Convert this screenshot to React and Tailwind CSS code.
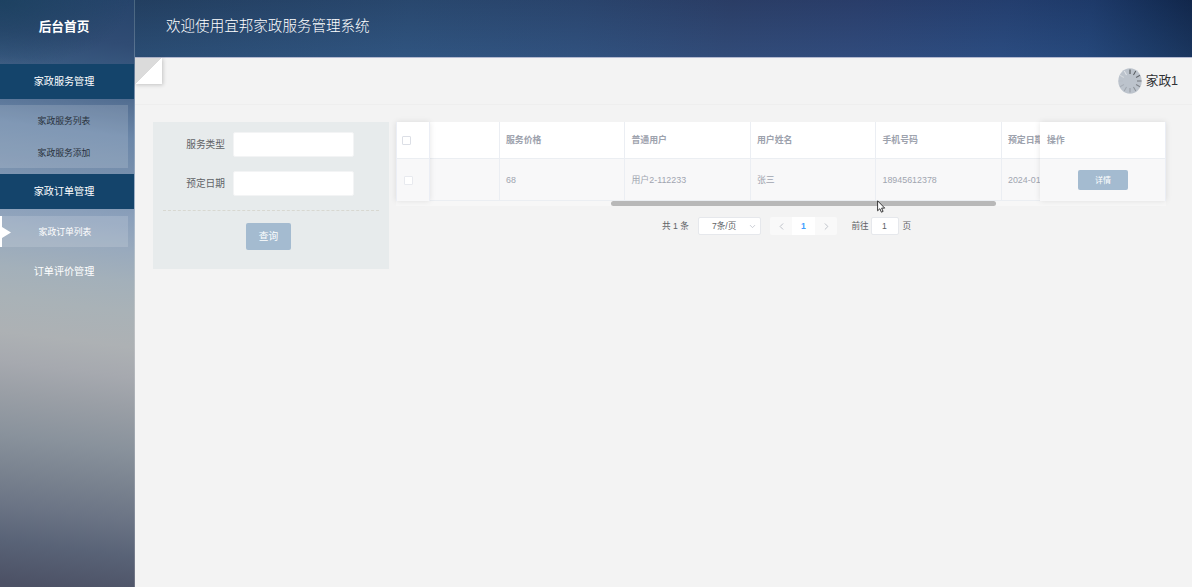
import { ChevronDown, ChevronLeft, ChevronRight } from "lucide-react";
import clsx from "clsx";

const columns = [
  { title: "", value: "", width: "w-[69.5px]" },
  { title: "服务价格", value: "68", width: "w-[125.5px]" },
  { title: "普通用户", value: "用户2-112233", width: "w-[125.5px]" },
  { title: "用户姓名", value: "张三", width: "w-[125.5px]" },
  { title: "手机号码", value: "18945612378", width: "w-[125.5px]" },
  { title: "预定日期", value: "2024-01-15", width: "w-[125.5px]" },
];

const ticks = [
  { angle: 0, color: "#45484d" },
  { angle: 30, color: "#55585d" },
  { angle: 60, color: "#62666c" },
  { angle: 90, color: "#72767c" },
  { angle: 120, color: "#7d8188" },
  { angle: 150, color: "#8b9097" },
  { angle: 180, color: "#969ba3" },
  { angle: 210, color: "#9fa5ad" },
  { angle: 240, color: "#a8aeb7" },
  { angle: 270, color: "#b9bfc8" },
  { angle: 300, color: "#d3d7dc" },
  { angle: 330, color: "#e0e3e7" },
];

function MenuTitle({ children, active, className }) {
  return (
    <div className={clsx("flex h-[35px] items-center justify-center pr-[6px] text-[10.1px] text-white", active && "bg-[#14446b]", className)}>
      {children}
    </div>
  );
}

function Sidebar() {
  return (
    <aside className="h-[587px] w-[135px] shrink-0 border-r border-white/20 bg-[radial-gradient(ellipse_130px_70px_at_0%_0%,rgba(26,64,94,0.8)_0%,rgba(26,64,94,0)_100%),linear-gradient(187deg,#26446b_0px,#304c74_45px,#38587f_70px,#587396_108px,#6b87a9_138px,#7890ad_177px,#8ba0bb_217px,#99aabd_250px,#a3b0ba_280px,#a9b2b7_310px,#adb1b4_345px,#a6a9af_375px,#9a9fa6_405px,#89929c_447px,#79828f_485px,#6b7485_517px,#596377_552px,#4c5165_594px)]">
      <div className="flex h-16 items-center justify-center pr-[6px] pb-[9px] text-[12.7px] font-bold text-white">后台首页</div>
      <MenuTitle active>家政服务管理</MenuTitle>
      <div className="mt-[6px] mr-[6px] h-[63px] bg-white/15 text-[8.8px] text-[#28313c]">
        <div className="flex h-[32px] items-center justify-center pt-[2px]">家政服务列表</div>
        <div className="flex h-[31px] items-center justify-center pt-[2px]">家政服务添加</div>
      </div>
      <MenuTitle active className="mt-[6px]">家政订单管理</MenuTitle>
      <div className="mt-[7px] mr-[6px] flex h-[31px] items-center bg-white/15 text-[8.8px] text-white">
        <svg width="11" height="31" viewBox="0 0 11 31" fill="#fff">
          <path d="M0 0h2v11l9 5.5L2 22v9H0z" />
        </svg>
        <span className="flex-1 pt-[2px] pr-[9px] text-center">家政订单列表</span>
      </div>
      <MenuTitle className="mt-[7px]">订单评价管理</MenuTitle>
    </aside>
  );
}

function Avatar() {
  return (
    <svg width="24" height="26" viewBox="0 0 24 26">
      <ellipse cx="12" cy="13" rx="11.7" ry="12.7" fill="#bcc3cc" />
      {ticks.map((t) => (
        <line key={t.angle} x1="12" y1="1.5" x2="12" y2="6" stroke={t.color} strokeWidth="1" transform={`rotate(${t.angle} 12 13)`} />
      ))}
    </svg>
  );
}

function Field({ label }) {
  return (
    <label className="flex h-[25px] items-center text-[9.7px] text-[#606266]">
      <span className="w-[72px] pt-[2px] text-right">{label}</span>
      <input className="ml-[8px] h-[24.5px] w-[121px] rounded-[2px] border border-[#f3f4f5] bg-white outline-none" />
    </label>
  );
}

function SearchForm() {
  return (
    <section className="h-[147px] w-[236px] shrink-0 bg-[#e7ebec] pt-[10px]">
      <Field label="服务类型" />
      <div className="h-[14px]" />
      <Field label="预定日期" />
      <div className="mx-[10px] mt-[14px] border-t border-dashed border-[#d8d8d1]" />
      <button className="mt-[12px] ml-[93px] block h-[27px] w-[45px] rounded-[2px] bg-[#a4bbd0] pt-px text-[9.7px] text-white">查询</button>
    </section>
  );
}

function Checkbox({ className }) {
  return <span className={clsx("block size-[9px] rounded-[1px] border bg-white", className)} />;
}

function OrderTable() {
  return (
    <div className="h-[84px] w-[770px] text-[8.9px] text-[#a0a5b0]">
      <div className="flex h-[79px]">
        <div className="relative z-10 w-[34.5px] shrink-0 border-x border-[#ebeef5] bg-[#f8f8f9] shadow-[0_0_6px_rgba(0,0,0,0.1)]">
          <div className="flex h-[37px] items-center border-b border-[#ebeef2] bg-white pl-[5.5px]">
            <Checkbox className="border-[#dcdfe6]" />
          </div>
          <div className="flex h-[42px] items-center pl-[7.4px]">
            <Checkbox className="border-[#e8eaef]" />
          </div>
        </div>
        <div className="flex min-w-0 flex-1 overflow-hidden">
          {columns.map((col, i) => (
            <div key={i} className={clsx("shrink-0 border-r border-[#ebeef3] whitespace-nowrap", col.width)}>
              <div className="flex h-[37px] items-center border-b border-[#ebeef2] bg-white pt-px pl-[6.5px] font-bold text-[#9da2ad]">{col.title}</div>
              <div className="flex h-[42px] items-center border-b border-[#ebeef2] bg-[#f8f8f9] pt-[2px] pl-[6.5px]">{col.value}</div>
            </div>
          ))}
        </div>
        <div className="relative z-10 w-[125.5px] shrink-0 border-r border-[#ebeef5] bg-[#f8f8f9] shadow-[0_0_6px_rgba(0,0,0,0.1)]">
          <div className="flex h-[37px] items-center border-b border-[#ebeef2] bg-white pt-px pl-[7px] font-bold text-[#9da2ad]">操作</div>
          <div className="flex h-[42px] items-center pl-[38px]">
            <button className="h-5 w-[50px] rounded-[2px] bg-[#a4bbd0] pt-px text-[8px] text-white">详情</button>
          </div>
        </div>
      </div>
      <div className="h-[5px] bg-[#f7f7f7]">
        <div className="ml-[215.5px] h-[5px] w-[385px] rounded-full bg-[#b8b8b8]" />
      </div>
    </div>
  );
}

function Pagination() {
  return (
    <div className="mt-[11px] ml-[266.5px] flex h-[18px] items-center text-[8.6px] text-[#606266]">
      <span className="w-[36px] whitespace-nowrap">共 1 条</span>
      <div className="flex h-[18px] w-[63px] items-center justify-between rounded-[2px] border border-[#e6e8ec] bg-white pr-[3px] pl-[13px]">
        7条/页
        <ChevronDown size={9} strokeWidth={2.2} className="text-[#c0c4cc]" />
      </div>
      <div className="ml-[9px] flex h-[18px] w-[67px] items-center overflow-hidden rounded-[2px] bg-[#f9f9f9]">
        <span className="flex w-[22px] justify-center text-[#b9bdc5]"><ChevronLeft size={11} /></span>
        <span className="flex h-full w-[23px] items-center justify-center bg-white font-bold text-[#409eff]">1</span>
        <span className="flex w-[22px] justify-center text-[#b9bdc5]"><ChevronRight size={11} /></span>
      </div>
      <span className="ml-[14.5px] w-[19px] whitespace-nowrap">前往</span>
      <span className="flex h-[18px] w-[28px] items-center justify-center rounded-[2px] border border-[#e6e8ec] bg-white">1</span>
      <span className="ml-[4px]">页</span>
    </div>
  );
}

export default function App() {
  return (
    <div className="relative flex h-[587px] w-[1192px] overflow-hidden bg-[#f3f3f3] font-['Liberation_Sans','Noto_Sans_CJK_SC',sans-serif]">
      <Sidebar />
      <main className="min-w-0 flex-1">
        <header className="h-[58px] border-b border-[#b3b9d0] bg-[linear-gradient(180deg,rgba(20,30,60,0.14)_0%,rgba(60,105,160,0.24)_100%),linear-gradient(98deg,#254466_0%,#2c4e76_26%,#2d4a74_42%,#2e426c_56%,#2d4271_68%,#264376_82%,#1f3e70_90%,#15305a_96%,#10264a_100%)] pt-[14px] pl-[31px] text-[14.55px] leading-[24px] font-light text-white">
          欢迎使用宜邦家政服务管理系统
        </header>
        <div className="flex h-[47px] items-start justify-between border-b border-[#eeeeee]">
          <div className="h-[26px] w-[27px] bg-[linear-gradient(135deg,#dbdbdb_50%,#fff_50%)] shadow-[1px_1px_4px_rgba(0,0,0,0.2)]" />
          <div className="mt-[10px] mr-[14px] flex items-center gap-[4px] text-[12.6px] text-[#303133]">
            <Avatar />
            <span>家政1</span>
          </div>
        </div>
        <div className="flex items-start gap-[6.5px] pt-[17px] pl-[18px]">
          <SearchForm />
          <div>
            <OrderTable />
            <Pagination />
          </div>
        </div>
      </main>
      {/* Mouse pointer */}
      <svg className="absolute top-[200px] left-[877px]" width="9" height="13" viewBox="0 0 9 13">
        <path d="M.6.8v10l2.3-2.1 1.5 3.5 1.7-.8-1.5-3.3h3.1z" fill="#fff" stroke="#222" strokeWidth=".9" />
      </svg>
    </div>
  );
}
